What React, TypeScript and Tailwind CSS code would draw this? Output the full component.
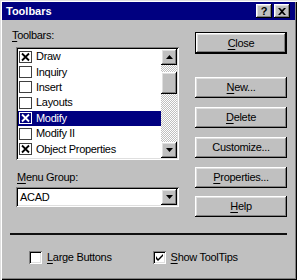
import React from 'react';

const raised =
    'shadow-[inset_-1px_-1px_0_#000,inset_1px_1px_0_#fff,inset_-2px_-2px_0_#808080,inset_2px_2px_0_#dfdfdf]';
const sunken =
    'shadow-[inset_1px_1px_0_#808080,inset_-1px_-1px_0_#fff,inset_2px_2px_0_#000,inset_-2px_-2px_0_#dfdfdf]';

const toolbars = [
    { name: 'Draw', checked: true },
    { name: 'Inquiry' },
    { name: 'Insert' },
    { name: 'Layouts' },
    { name: 'Modify', checked: true, selected: true },
    { name: 'Modify II' },
    { name: 'Object Properties', checked: true },
];

// letra subrayada (tecla de acceso)
const Key: React.FC<{ k: string; rest: string }> = ({ k, rest }) => (
    <span>
        <span className="underline underline-offset-[2px]">{k}</span>
        {rest}
    </span>
);

const Arrow: React.FC<{ up?: boolean }> = ({ up }) => (
    <svg width="7" height="4" viewBox="0 0 7 4">
        {up ? <path d="M3.5 0L7 4H0Z" fill="#000" /> : <path d="M0 0H7L3.5 4Z" fill="#000" />}
    </svg>
);

const ListCheck: React.FC<{ checked?: boolean; selected?: boolean }> = ({ checked, selected }) => {
    const c = selected ? '#fff' : '#000';
    return (
        <svg width="13" height="12" viewBox="0 0 13 12" className="shrink-0">
            <rect x="0.5" y="0.5" width="12" height="11" fill={selected ? 'none' : '#fff'} stroke={selected ? '#fff' : '#404040'} />
            {checked && <path d="M3 2.5L10 9.5M10 2.5L3 9.5" stroke={c} strokeWidth="1.8" />}
        </svg>
    );
};

const Button: React.FC<{ children: React.ReactNode; isDefault?: boolean; className?: string }> = ({ children, isDefault, className }) => {
    if (isDefault) {
        return (
            <div className={`w-[92px] h-[22px] border border-black ${className ?? ''}`}>
                <div className={`w-full h-full flex items-center justify-center ${raised}`}>{children}</div>
            </div>
        );
    }
    return (
        <div className={`w-[92px] h-[21px] flex items-center justify-center ${raised} ${className ?? ''}`}>
            {children}
        </div>
    );
};

const BoxCheck: React.FC<{ checked?: boolean }> = ({ checked }) => (
    <div className={`w-[13px] h-[13px] bg-white flex items-center justify-center shrink-0 ${sunken}`}>
        {checked && (
            <svg width="7" height="7" viewBox="0 0 7 7">
                <path d="M0 2L0 5L2 7L7 2L7 0L2 5Z" fill="#000" />
            </svg>
        )}
    </div>
);

export default function App() {
    return (
        <div
            className="w-[297px] h-[280px] bg-[#c0c0c0] p-[2px] text-[11px] leading-[13px] text-black tracking-[-0.3px] font-['Liberation_Sans',Arial,sans-serif] shadow-[inset_1px_1px_0_#dfdfdf,inset_2px_2px_0_#fff,inset_-1px_-1px_0_#000,inset_-2px_-2px_0_#808080]"
        >
            {/* barra de titulo */}
            <div className="h-[18px] bg-[#000080] flex items-center pl-[4px] pr-[5px]">
                <span className="text-white font-bold tracking-normal">Toolbars</span>
                <div className="ml-auto flex gap-[2px]">
                    <div className={`w-[16px] h-[14px] bg-[#c0c0c0] text-black flex items-center justify-center font-bold text-[11px] tracking-normal ${raised}`}>
                        ?
                    </div>
                    <div className={`w-[16px] h-[14px] bg-[#c0c0c0] flex items-center justify-center ${raised}`}>
                        <svg width="8" height="7" viewBox="0 0 8 7">
                            <path d="M0 0H2L4 2L6 0H8L5 3.5L8 7H6L4 5L2 7H0L3 3.5Z" fill="#000" />
                        </svg>
                    </div>
                </div>
            </div>

            <div className="h-[213px] flex">
                {/* columna izquierda */}
                <div className="w-[180px] pt-[9px]">
                    <div className="pl-[10px]">
                        <Key k="T" rest="oolbars:" />
                    </div>
                    <div className={`ml-[14px] mt-[5px] w-[163px] h-[113px] bg-white p-[2px] flex ${sunken}`}>
                        <div className="flex-1">
                            {toolbars.map((t) => (
                                <div
                                    key={t.name}
                                    className={`h-[15.4px] flex items-center pl-[1px] gap-[4px] ${t.selected ? 'bg-[#000080] text-white' : ''}`}
                                >
                                    <ListCheck checked={t.checked} selected={t.selected} />
                                    <span>{t.name}</span>
                                </div>
                            ))}
                        </div>
                        {/* barra de desplazamiento */}
                        <div className="w-[16px] flex flex-col bg-[repeating-conic-gradient(#c0c0c0_0_25%,#fff_0_50%)] bg-[length:2px_2px]">
                            <div className={`h-[16px] bg-[#c0c0c0] flex items-center justify-center ${raised}`}>
                                <Arrow up />
                            </div>
                            <div className={`h-[22px] mt-[7px] bg-[#c0c0c0] ${raised}`} />
                            <div className={`h-[16px] mt-auto bg-[#c0c0c0] flex items-center justify-center ${raised}`}>
                                <Arrow />
                            </div>
                        </div>
                    </div>
                    <div className="pl-[15px] mt-[11px]">
                        <Key k="M" rest="enu Group:" />
                    </div>
                    <div className={`ml-[14px] mt-[3px] w-[163px] h-[20px] bg-white p-[2px] flex items-center ${sunken}`}>
                        <span className="pl-[2px]">ACAD</span>
                        <div className={`ml-auto w-[16px] h-[16px] bg-[#c0c0c0] flex items-center justify-center ${raised}`}>
                            <Arrow />
                        </div>
                    </div>
                </div>

                {/* columna derecha */}
                <div className="ml-[13px] pt-[12px] flex flex-col">
                    <Button isDefault>
                        <Key k="C" rest="lose" />
                    </Button>
                    <Button className="mt-[23px]">
                        <Key k="N" rest="ew..." />
                    </Button>
                    <Button className="mt-[9px]">
                        <Key k="D" rest="elete" />
                    </Button>
                    <Button className="mt-[9px]">
                        <span>Customize...</span>
                    </Button>
                    <Button className="mt-[9px]">
                        <Key k="P" rest="roperties..." />
                    </Button>
                    <Button className="mt-[8px]">
                        <Key k="H" rest="elp" />
                    </Button>
                </div>
            </div>

            {/* separador */}
            <div className="ml-[8px] mr-[8px] h-[2px] bg-[#101010]" />

            <div className="mt-[16px] flex items-center">
                <div className="ml-[27px] flex items-center gap-[5px]">
                    <BoxCheck />
                    <Key k="L" rest="arge Buttons" />
                </div>
                <div className="ml-[41px] flex items-center gap-[5px]">
                    <BoxCheck checked />
                    <Key k="S" rest="how ToolTips" />
                </div>
            </div>
        </div>
    );
}
